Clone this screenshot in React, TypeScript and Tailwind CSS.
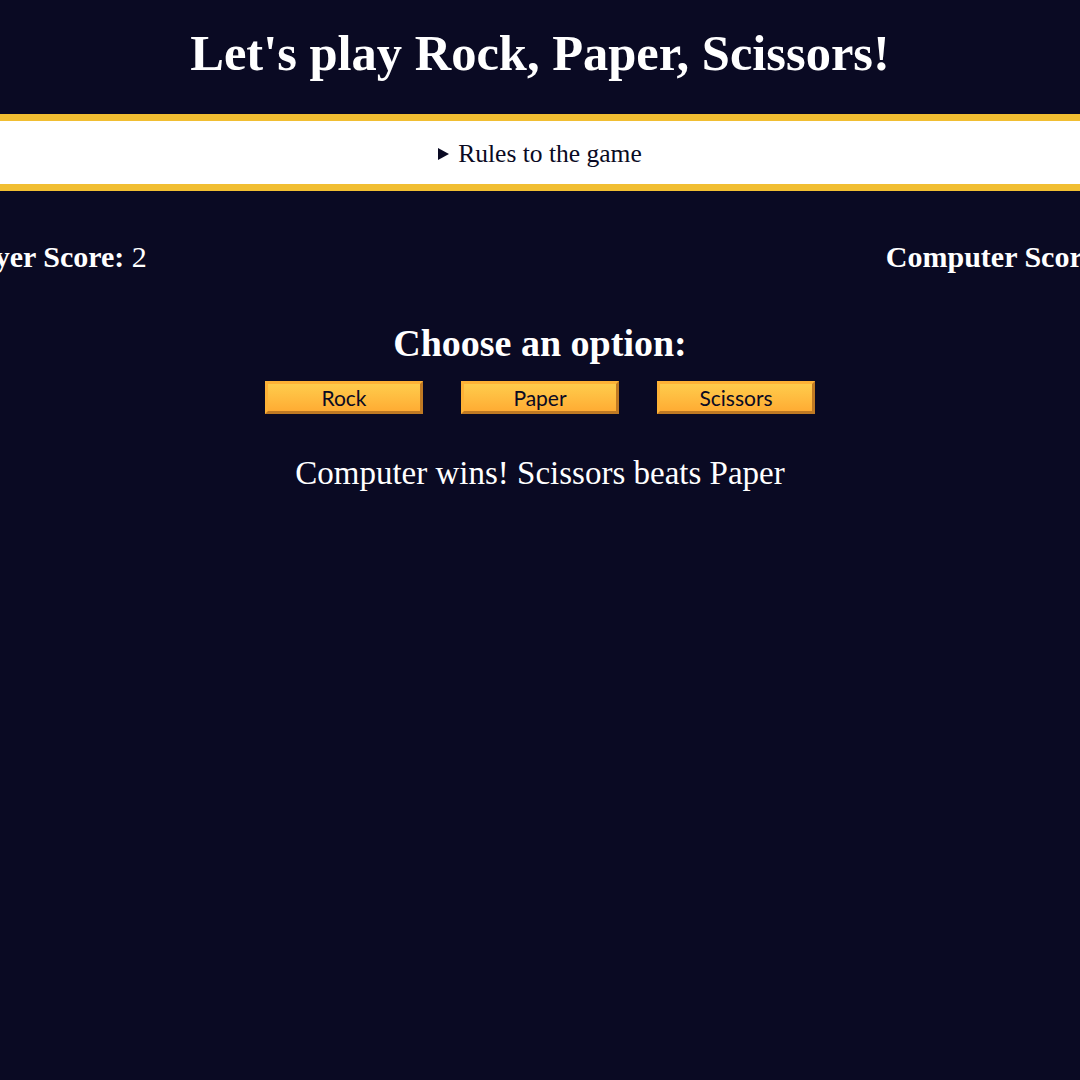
export default function App() {
  const choices = ["Rock", "Paper", "Scissors"];
  return (
    <div className="min-h-screen overflow-hidden bg-[#0a0a23] text-white" style={{ fontFamily: '"Liberation Serif", serif' }}>
      <h1 className="pt-[24px] pb-[32px] text-center text-[50.5px] font-bold leading-[58px]">
        Let's play Rock, Paper, Scissors!
      </h1>
      <details className="border-y-[7px] border-[#f1be32] bg-white pt-[16px] pb-[14px] text-center text-[25.5px] text-[#0a0a23]">
        <summary className="flex cursor-pointer list-none items-center justify-center gap-[9px] leading-[33px] [&::-webkit-details-marker]:hidden">
          <svg width="11" height="12" viewBox="0 0 11 12" className="mt-[1px]">
            <path d="M0 0 L11 6 L0 12 Z" fill="#0a0a23" />
          </svg>
          <span>Rules to the game</span>
        </summary>
      </details>
      <div className="ml-[-47px] mr-[-48px] mt-[49px] flex justify-between text-[30px] leading-[33px]">
        <p className="whitespace-nowrap"><strong>Player Score:</strong> 2</p>
        <p className="whitespace-nowrap"><strong>Computer Score:</strong> 3</p>
      </div>
      <h2 className="mt-[47px] text-center text-[38px] font-bold leading-[46px]">Choose an option:</h2>
      <div className="mt-[15px] flex justify-center gap-[38px]">
        {choices.map((c) => (
          <button
            key={c}
            className="h-[33px] w-[158px] border-[3px] border-t-[#feb236] border-l-[#feb236] border-r-[#c07a23] border-b-[#c07a23] bg-gradient-to-b from-[#fecc4c] to-[#ffac33] text-[21px] leading-none text-[#0a0a23]"
            style={{ fontFamily: '"Lato", "Open Sans", sans-serif' }}
          >
            {c}
          </button>
        ))}
      </div>
      <p className="mt-[40px] text-center text-[33px] leading-[38px]">Computer wins! Scissors beats Paper</p>
    </div>
  );
}
